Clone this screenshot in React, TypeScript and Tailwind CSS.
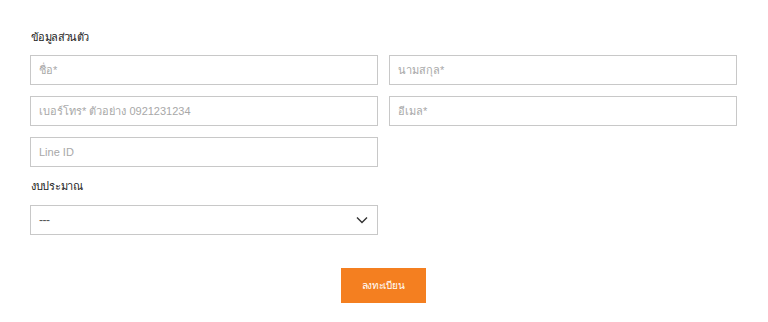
import React from "react";

const font = { fontFamily: '"Liberation Sans", "Noto Sans", sans-serif' };

function Field({ ph }: { ph: string }) {
  return (
    <div className="h-[30px] border border-[#c8c8c8] bg-white flex items-center px-[8px] text-[11px] text-[#a8a8a8]">
      {ph}
    </div>
  );
}

export default function App() {
  return (
    <div className="w-[768px] h-[322px] bg-white" style={font}>
      <div className="pl-[30px] pr-[31px] pt-[28px]">
        <div className="h-[18px] flex items-center text-[11px] tracking-[-0.6px] font-medium text-[#222] mb-[9px] pl-[1px]">ข้อมูลส่วนตัว</div>
        <div className="grid grid-cols-2 gap-x-[11px] gap-y-[11px]">
          <Field ph="ชื่อ*" />
          <Field ph="นามสกุล*" />
          <Field ph="เบอร์โทร* ตัวอย่าง 0921231234" />
          <Field ph="อีเมล*" />
          <Field ph="Line ID" />
          <div />
        </div>
        <div className="h-[18px] flex items-center text-[11px] tracking-[-0.3px] text-[#222] mt-[10px] mb-[10px] pl-[1px]">งบประมาณ</div>
        <div className="grid grid-cols-2 gap-x-[11px]">
          <div className="h-[30px] border border-[#c8c8c8] bg-white flex items-center justify-between pl-[8px] pr-[9px] text-[12px] text-[#555]">
            <span className="tracking-[-0.5px]">---</span>
            <svg width="12" height="8" viewBox="0 0 12 8" fill="none">
              <path d="M1 1.5L6 6.5L11 1.5" stroke="#333" strokeWidth="1.4" />
            </svg>
          </div>
          <div />
        </div>
        <div className="flex justify-center mt-[33px] pr-[1px]">
          <button className="w-[85px] h-[35px] bg-[#f47f20] text-white text-[10px] tracking-[-0.3px] flex items-center justify-center">ลงทะเบียน</button>
        </div>
      </div>
    </div>
  );
}
